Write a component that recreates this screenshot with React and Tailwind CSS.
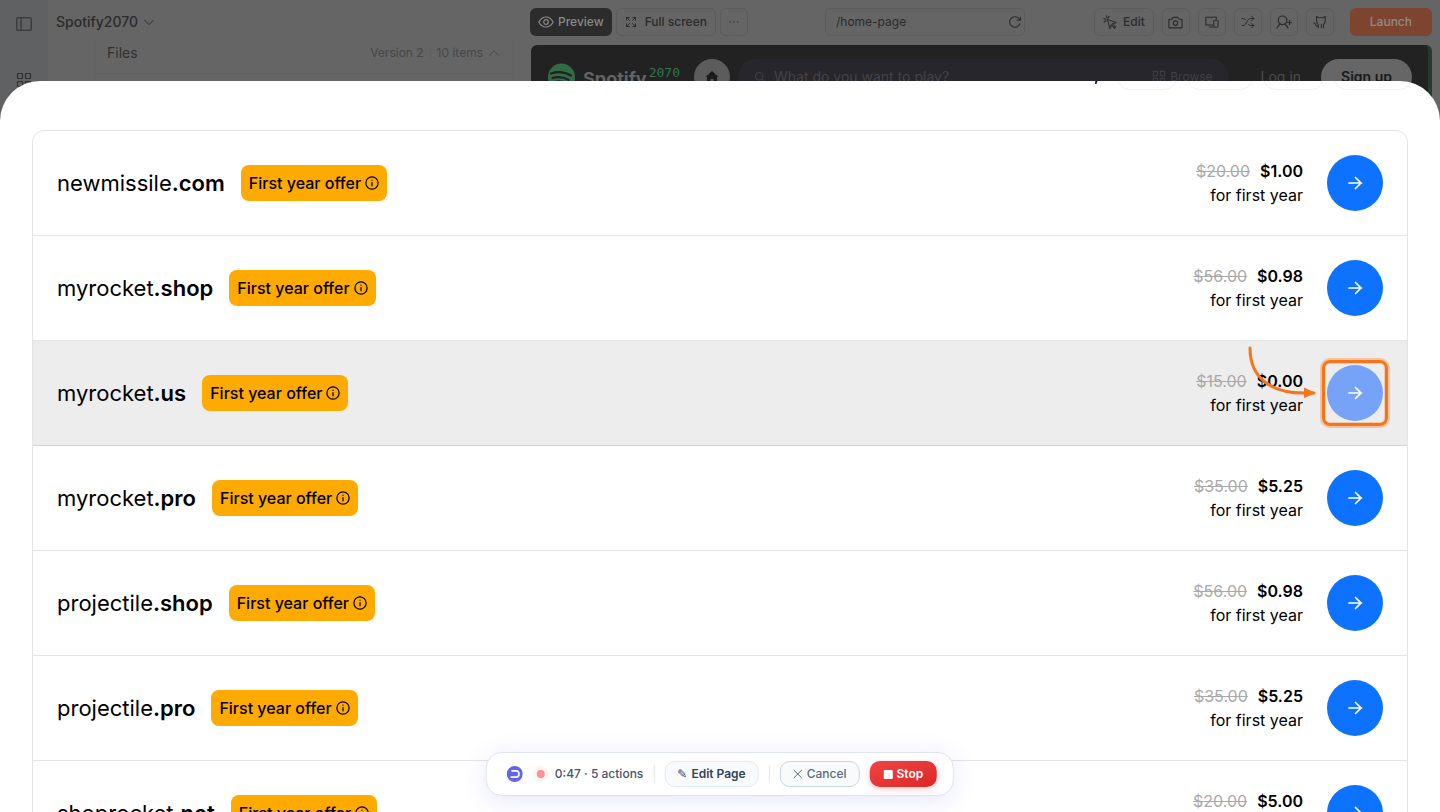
import React from 'react';
import { LuShuffle } from 'react-icons/lu';

const domains = [
  { name: 'newmissile', tld: '.com', was: '$20.00', now: '$1.00' },
  { name: 'myrocket', tld: '.shop', was: '$56.00', now: '$0.98' },
  { name: 'myrocket', tld: '.us', was: '$15.00', now: '$0.00', active: true },
  { name: 'myrocket', tld: '.pro', was: '$35.00', now: '$5.25' },
  { name: 'projectile', tld: '.shop', was: '$56.00', now: '$0.98' },
  { name: 'projectile', tld: '.pro', was: '$35.00', now: '$5.25' },
  { name: 'shoprocket', tld: '.net', was: '$20.00', now: '$5.00' },
];

function Icon({ size = 16, width = 1.2, children }) {
  return (
    <svg width={size} height={size} viewBox="0 0 16 16" fill="none" stroke="currentColor" strokeWidth={width} strokeLinecap="round" strokeLinejoin="round" className="shrink-0" aria-hidden="true">
      {children}
    </svg>
  );
}

function GridIcon({ size }) {
  return (
    <Icon size={size}>
      <rect x="1.5" y="1.5" width="5" height="5" rx=".5" />
      <rect x="9.5" y="1.5" width="5" height="5" rx=".5" />
      <rect x="1.5" y="9.5" width="5" height="5" rx=".5" />
      <rect x="9.5" y="9.5" width="5" height="5" rx=".5" />
    </Icon>
  );
}

function ToolButton({ label, children }) {
  return (
    <button aria-label={label} className="flex h-7 w-7 items-center justify-center rounded-md border border-[#5c5c5c]">
      {children}
    </button>
  );
}

function FilesPanel() {
  return (
    <div className="flex w-[530px] shrink-0">
      <nav className="flex w-12 flex-col items-center gap-10 bg-[#5f6163] pt-4 text-[#303030]">
        <button aria-label="Toggle sidebar">
          <Icon width={1.1}><rect x=".8" y="1.8" width="14.4" height="12.4" rx="1" /><path d="M5 2v12" /></Icon>
        </button>
        <button aria-label="Apps"><GridIcon size={16} /></button>
      </nav>
      <div className="flex flex-1 flex-col pt-3">
        <button className="flex h-5 items-center gap-1 self-start pl-2 text-sm font-medium text-[#2b2b2b]">
          Spotify2070
          <Icon size={14} width={1.1}><path d="M3 6l5 5 5-5" /></Icon>
        </button>
        <div className="mt-2 mr-4 ml-[46px] flex-1 border-x border-[#616161]">
          <div className="flex h-[34px] items-center justify-between border-b border-[#616161] pr-3 pb-2 pl-3">
            <span className="text-sm text-[#303030]">Files</span>
            <span className="flex items-center gap-1 text-xs text-[#474747]">
              Version 2 <span className="mx-0.5 h-3 border-l border-[#606060]" /> 10 items
              <Icon size={14} width={1}><path d="M3 10.500l5-5 5 5" /></Icon>
            </span>
          </div>
        </div>
      </div>
    </div>
  );
}

function Toolbar() {
  return (
    <div className="flex h-11 items-center pr-2 text-xs font-medium text-[#2b2b2b]">
      <button className="flex h-7 items-center gap-1 rounded-md bg-[#2c2c2d] px-2 text-[#8a8a8a]">
        <Icon size={16}><path d="M.8 8S3.500 3 8 3s7.200 5 7.200 5S12.500 13 8 13 .8 8 .8 8z" /><circle cx="8" cy="8" r="2.300" /></Icon>
        Preview
      </button>
      <button className="ml-1 flex h-7 items-center gap-2 rounded-md border border-[#5c5c5c] px-2">
        <Icon size={12} width={1.3}>
          <path d="M2 5.500V2h3.500M2 2l4 4M10.500 2H14v3.500M14 2l-4 4M2 10.500V14h3.500M2 14l4-4M14 10.500V14h-3.500M14 14l-4-4" />
        </Icon>
        Full screen
      </button>
      <button aria-label="More" className="ml-1 flex h-7 w-7 items-center justify-center rounded-md border border-[#5c5c5c]">
        <Icon size={12} width={1.8}><path d="M3 8h.01M8 8h.01M13 8h.01" /></Icon>
      </button>
      <div className="flex flex-1 justify-center pl-2">
        <label className="flex h-7 w-[200px] items-center rounded-md border border-[#5c5c5c] pr-0.5 pl-2.5">
          <input aria-label="Page path" defaultValue="/home-page" className="min-w-0 flex-1 bg-transparent font-normal outline-none" />
          <Icon size={14}><path d="M13.500 10A6 6 0 1 1 12.500 4.200L14 6M14.200 2.200V6h-3.800" /></Icon>
        </label>
      </div>
      <div className="flex items-center gap-2">
        <button className="flex h-7 items-center gap-1.5 rounded-md border border-[#5c5c5c] px-2">
          <Icon size={14} width={1.2}><path d="M5 5l10 3.500-4.200 1.700 3.700 3.300-1.500 1.500-3.500-3.800L8 15.500zM4.500 3.500L4 1M3.200 4.800L1 4M3.300 6.500L1.300 8M5.800 3.300L7.200 1.500" /></Icon>
          Edit
        </button>
        <ToolButton label="Screenshot">
          <Icon size={15} width={1.2}><path d="M1 4.500h3L5.500 2.500h5L12 4.500h3v9.200H1z" /><circle cx="8" cy="8.600" r="2.400" /></Icon>
        </ToolButton>
        <ToolButton label="Devices">
          <Icon size={14} width={1.2}><path d="M8.500 11.500H1v-9h12v2M5 13.800h4" /><rect x="10" y="6" width="5" height="8" rx="1.500" /></Icon>
        </ToolButton>
        <ToolButton label="Shuffle"><LuShuffle size={14} strokeWidth={1.7} /></ToolButton>
        <ToolButton label="Invite">
          <Icon size={16} width={1.2}><circle cx="6.500" cy="6.300" r="4.300" /><path d="M1 14c.7-2 1.800-3.200 3.200-3.900M12 14c-.7-2-1.800-3.200-3.200-3.900M13.500 6.500v4M11.500 8.500h4" /></Icon>
        </ToolButton>
        <ToolButton label="Repository">
          <Icon size={14} width={1.2}><path d="M6 14.500v-4C4.200 10 4 8.500 4 6V1.800l2.500 1.400h5L14 1.800V6c0 2.500-.2 4-2 4.500v4M9.500 11v3.500M6 12.500c-2 .6-3-.5-3.200-2-.2-1-.8-1.300-1.800-1.300" /></Icon>
        </ToolButton>
        <button className="ml-2 h-7 rounded-md bg-[#7d452f] px-5 text-[#938a84]">Launch</button>
      </div>
    </div>
  );
}

function SitePreview() {
  return (
    <div className="mt-px mr-2 ml-px flex flex-1 items-start rounded-t-md border-r-4 border-[#263a2f] bg-[#222] pt-3.5 pr-4 pl-4">
      <svg width="28" height="28" viewBox="0 0 28 28" className="mt-1 shrink-0" aria-hidden="true">
        <circle cx="14.500" cy="14" r="13.500" fill="#326c43" />
        <path d="M4 10.500c7-2.300 14-1.500 20 2M5.500 15c6-1.600 11-.9 16 1.800M7 19c4.500-1.200 8.500-.7 12.500 1.400" fill="none" stroke="#222" strokeWidth="2.300" strokeLinecap="round" />
      </svg>
      <span className="mt-2 ml-2 text-[18px] leading-6 font-bold text-[#636363]">Spotify</span>
      <span className="mt-1 ml-0.5 font-['DejaVu_Sans_Mono',monospace] text-[13px] leading-5 text-[#2f7548]">2070</span>
      <button aria-label="Home" className="ml-3.5 flex h-9 w-9 shrink-0 items-center justify-center rounded-full bg-[#5c5c5c] text-[#1b1b1b]">
        <svg width="14" height="14" viewBox="0 0 14 14" fill="currentColor" aria-hidden="true"><path d="M7 1l6.500 6H12v6H8.500V9h-3v4H2V7H.5z" /></svg>
      </button>
      <div className="ml-2 flex h-9 flex-1 items-center rounded-full bg-[#27262c] px-4 text-[#414145]">
        <Icon size={12} width={1.4}><circle cx="7" cy="7" r="5" /><path d="M11 11l3.500 4" /></Icon>
        <input aria-label="Search" placeholder="What do you want to play?" className="ml-2 min-w-0 flex-1 bg-transparent text-sm outline-none placeholder:text-[#444448]" />
        <button className="flex items-center gap-1 text-xs"><GridIcon size={14} />Browse</button>
      </div>
      <button className="mt-1.5 ml-8 text-sm leading-6 text-[#4b4b4b]">Log in</button>
      <button className="ml-5 h-9 rounded-full bg-[#666] px-5 text-sm font-semibold text-[#1a1a1a]">Sign up</button>
    </div>
  );
}

function Pointer() {
  return (
    <>
      <span className="pointer-events-none absolute -inset-[5px] rounded-lg border-3 border-[#f6751a] shadow-[0_0_0_2px_#f9731655,inset_0_0_0_1px_#f9731644]" />
      <svg width="72" height="58" viewBox="0 0 72 58" className="pointer-events-none absolute right-full bottom-5 mr-2.5" aria-hidden="true">
        <path d="M5 5C5 35 26 50 59 50h10" fill="none" stroke="#f6751a" strokeWidth="3" strokeLinecap="round" />
        <path d="M59 44.500l12 5.500-12 5z" fill="#f6751a" />
      </svg>
    </>
  );
}

function DomainRow({ name, tld, was, now, active }) {
  return (
    <li className={`flex items-center border-b px-6 py-6 ${active ? 'border-[#d2d2d2] bg-[#ededed]' : 'border-[#e5e5e5]'}`}>
      <span className="text-[22px] leading-8">{name}<strong className="font-semibold">{tld}</strong></span>
      <span className="ml-4 flex h-9 items-center gap-1 rounded-lg bg-[#ffaa00] px-2 text-base font-medium">
        First year offer
        <Icon size={14} width={1.4}><circle cx="8" cy="8" r="7" /><path d="M8 7.500v3.700M8 4.700v.2" /></Icon>
      </span>
      <div className="ml-auto text-right text-base">
        <div className="flex justify-end gap-2.5">
          <s className="text-[#a9a9a9]">{was}</s>
          <strong className="font-semibold">{now}</strong>
        </div>
        <div>for first year</div>
      </div>
      <div className="relative ml-6">
        <button aria-label={`Select ${name}${tld}`} className={`flex h-14 w-14 items-center justify-center rounded-full text-white ${active ? 'bg-[#76a2f7]' : 'bg-[#0d72ff]'}`}>
          <Icon size={16} width={1.7}><path d="M2 8h12.500M8.500 2.500L14 8l-5.500 5.500" /></Icon>
        </button>
        {active && <Pointer />}
      </div>
    </li>
  );
}

function Recorder() {
  return (
    <div className="absolute bottom-4 left-1/2 flex h-11 -translate-x-1/2 items-center rounded-2xl border border-[#dfe5ee] bg-white pr-4 pl-5 text-xs whitespace-nowrap text-[#475569] shadow-[0_4px_24px_rgba(99,102,241,0.16)]">
      <svg width="16" height="16" viewBox="0 0 17 17" className="shrink-0" aria-hidden="true">
        <circle cx="8.500" cy="8.500" r="8.500" fill="#6264eb" />
        <path d="M5.500 5.200h4.200a3.300 3.300 0 0 1 0 6.600H4.500" fill="none" stroke="#fff" strokeWidth="1.700" strokeLinecap="round" />
      </svg>
      <span className="mr-2.5 ml-3.5 h-2 w-2 rounded-full bg-[#fb9292] ring-4 ring-[#fff3f3]" />
      <span className="font-medium">0:47 · 5 actions</span>
      <span className="mx-2.5 h-[18px] border-l border-[#e2e8f0]" />
      <button className="flex h-[26px] items-center gap-1 rounded-[10px] border border-[#e2e8f0] bg-[#f8fafc] px-3 font-semibold text-[#334155]">
        <span className="font-['DejaVu_Sans',sans-serif] font-normal">✎</span>Edit Page
      </button>
      <span className="mx-2.5 h-[18px] border-l border-[#e2e8f0]" />
      <button className="flex h-[26px] items-center gap-1 rounded-[10px] border border-[#cbd5e1] bg-[#f8fafc] px-3 font-medium text-[#5b6a80]">
        <Icon size={10} width={1.6}><path d="M2 2l12 12M14 2L2 14" /></Icon>Cancel
      </button>
      <button className="ml-2.5 flex h-[26px] items-center gap-1 rounded-[10px] bg-linear-to-br from-[#ef4444] to-[#dc2626] px-3.5 font-semibold text-white shadow-[0_2px_6px_rgba(239,68,68,0.3)]">
        <span className="h-[9px] w-[9px] rounded-[1px] bg-white" />Stop
      </button>
    </div>
  );
}

export default function App() {
  return (
    <div className="relative flex h-screen overflow-hidden bg-[#656565] font-['Inter',sans-serif] text-black">
      <FilesPanel />
      <div className="flex min-w-0 flex-1 flex-col">
        <Toolbar />
        <SitePreview />
      </div>
      <section className="absolute inset-x-0 top-[81px] bottom-0 overflow-hidden rounded-t-[40px] bg-white px-8">
        <div className="-mr-1 flex h-[49px] items-start justify-end gap-2.5">
          <span className="-mt-3.5 mr-2 text-base leading-4 font-semibold">,</span>
          <span className="-mt-4 h-[25px] w-[60px] rounded-full border border-[#f0f0f0]" />
          <span className="-mt-4 h-[25px] w-[66px] rounded-full border border-[#f0f0f0]" />
          <span className="-mt-4 h-[25px] w-[61px] rounded-full border border-[#f0f0f0]" />
          <span className="-mt-4 h-[25px] w-[78px] rounded-full border border-[#f0f0f0]" />
        </div>
        <ul className="rounded-xl border border-[#e5e5e5]">
          {domains.map(d => <DomainRow key={d.name + d.tld} {...d} />)}
        </ul>
      </section>
      <Recorder />
    </div>
  );
}
